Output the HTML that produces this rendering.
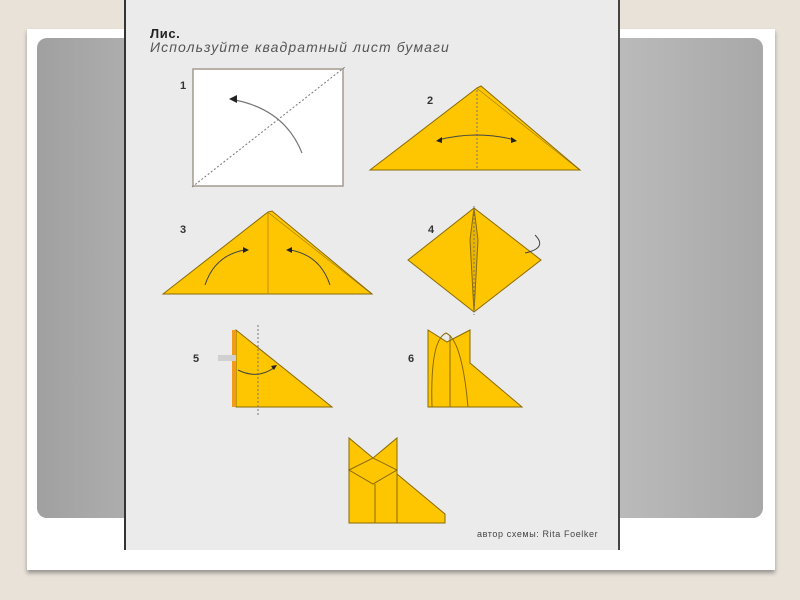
<!DOCTYPE html><html><head><meta charset="utf-8"><style>
body{margin:0;width:800px;height:600px;background:#e8e2d9;position:relative;overflow:hidden;font-family:"Liberation Sans",sans-serif}
.card{position:absolute;left:27px;top:29px;width:748px;height:541px;background:#fff;box-shadow:0 3px 4px rgba(0,0,0,.35)}
.panel{position:absolute;left:37px;top:38px;width:726px;height:480px;border-radius:10px;background:linear-gradient(90deg,#a0a0a0,#d6d6d6 50%,#a8a8a8)}
.doc{position:absolute;left:124px;top:0;width:492px;height:550px;background:#ebebeb;border-left:2px solid #333;border-right:2px solid #444}
</style></head><body>
<div class="card"></div><div class="panel"></div><div class="doc"></div>
<svg style="position:absolute;left:0;top:0" width="800" height="600">
<text x="150" y="38" font-size="13" font-weight="bold" fill="#222" font-family="Liberation Sans" letter-spacing="0.6">Лис.</text>
<text x="150" y="52" font-size="14" font-style="italic" fill="#555" font-family="Liberation Sans" letter-spacing="1.1">Используйте квадратный лист бумаги</text>
<g font-size="11" font-weight="bold" fill="#333" font-family="Liberation Sans">
<text x="180" y="89">1</text><text x="427" y="104">2</text><text x="180" y="233">3</text><text x="428" y="233">4</text><text x="193" y="362">5</text><text x="408" y="362">6</text></g>
<rect x="193" y="69" width="150" height="117" fill="#fff" stroke="#a59b90" stroke-width="1.5"/>
<line x1="192" y1="187" x2="345" y2="67" stroke="#777" stroke-dasharray="2,2"/>
<path d="M302 153 Q285 110 235 100" fill="none" stroke="#777" stroke-width="1.2"/><path d="M229 99 l8 -4 v8z" fill="#222"/>
<g stroke="#8a6a00" stroke-width="1" fill="#fec600">
<path d="M370 170 L477 88 L580 170Z"/><path d="M477 88 L481 86 L580 170"/>
<path d="M163 294 L268 212 L372 294Z"/><path d="M268 212 L272 211 L372 294"/><line x1="268" y1="212" x2="268" y2="294" stroke="#c98a00"/>
<path d="M408 260 L474 208 L541 260 L474 312Z"/><path d="M474 208 L470 240 L474 312 L478 240Z" fill="#e8b400"/>
<path d="M236 330 L332 407 L236 407Z"/>
<path d="M428 407 V330 L447 342 L470 330 V363 L522 407Z"/><path d="M432 407 Q430 340 446 333 Q462 340 468 407" fill="none"/><line x1="450" y1="335" x2="450" y2="407"/>
<path d="M349 523 V438 L373 458 L397 438 V474 L445 514 L445 523Z"/><path d="M349 470 L373 458 L397 470 L373 484Z"/><line x1="375" y1="484" x2="375" y2="523"/><line x1="397" y1="474" x2="397" y2="523"/>
</g>
<rect x="232" y="330" width="4" height="77" fill="#f29a1a"/><rect x="218" y="355" width="18" height="6" fill="#d0d0d0"/>
<g stroke="#777" stroke-dasharray="2,2" fill="none"><line x1="477" y1="90" x2="477" y2="170"/><line x1="258" y1="325" x2="258" y2="416"/><line x1="474" y1="206" x2="474" y2="315"/></g>
<g fill="none" stroke="#444" stroke-width="1"><path d="M438 140 Q477 130 515 140"/><path d="M205 285 Q215 255 245 250"/><path d="M330 285 Q320 255 290 250"/><path d="M238 370 Q258 380 275 367"/><path d="M525 253 Q548 248 535 235"/></g>
<g fill="#222"><path d="M436 141 l6 -4 v6z"/><path d="M517 141 l-6 -4 v6z"/><path d="M277 365 l-6 1 3 4z"/><path d="M249 250 l-6 -3 v6z"/><path d="M286 250 l6 -3 v6z"/></g>
<text x="477" y="537" font-size="9" fill="#444" font-family="Liberation Sans" letter-spacing="0.6">автор схемы: Rita Foelker</text>
</svg></body></html>
